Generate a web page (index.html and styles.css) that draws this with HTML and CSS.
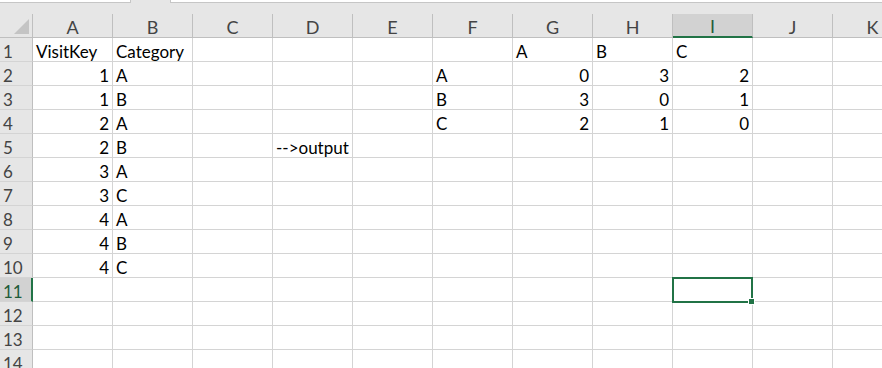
FILE: index.html
```html
<!DOCTYPE html>
<html lang="en">
<head>
    <meta charset="UTF-8">
    <meta name="viewport" content="width=device-width, initial-scale=1.0">
    <title>Hoja1</title>
<link rel="stylesheet" href="styles.css">
</head>
<body>
    <!-- Borde inferior del cuadro de nombres y de la barra de formulas -->
    <div class="toolbar">
        <div class="name-box"></div>
        <div class="formula-bar"></div>
    </div>

    <table class="sheet">
        <thead>
            <tr>
                <th class="corner"><span class="corner-mark"></span></th>
                <th>A</th><th>B</th><th>C</th><th>D</th><th>E</th><th>F</th>
                <th>G</th><th>H</th><th class="col-active">I</th><th>J</th><th>K</th>
            </tr>
        </thead>
        <tbody>
            <tr><th>1</th><td>VisitKey</td><td>Category</td><td></td><td></td><td></td><td></td><td>A</td><td>B</td><td>C</td><td></td><td></td></tr>
            <tr><th>2</th><td class="num">1</td><td>A</td><td></td><td></td><td></td><td>A</td><td class="num">0</td><td class="num">3</td><td class="num">2</td><td></td><td></td></tr>
            <tr><th>3</th><td class="num">1</td><td>B</td><td></td><td></td><td></td><td>B</td><td class="num">3</td><td class="num">0</td><td class="num">1</td><td></td><td></td></tr>
            <tr><th>4</th><td class="num">2</td><td>A</td><td></td><td></td><td></td><td>C</td><td class="num">2</td><td class="num">1</td><td class="num">0</td><td></td><td></td></tr>
            <tr><th>5</th><td class="num">2</td><td>B</td><td></td><td>--&gt;output</td><td></td><td></td><td></td><td></td><td></td><td></td><td></td></tr>
            <tr><th>6</th><td class="num">3</td><td>A</td><td></td><td></td><td></td><td></td><td></td><td></td><td></td><td></td><td></td></tr>
            <tr><th>7</th><td class="num">3</td><td>C</td><td></td><td></td><td></td><td></td><td></td><td></td><td></td><td></td><td></td></tr>
            <tr><th>8</th><td class="num">4</td><td>A</td><td></td><td></td><td></td><td></td><td></td><td></td><td></td><td></td><td></td></tr>
            <tr><th>9</th><td class="num">4</td><td>B</td><td></td><td></td><td></td><td></td><td></td><td></td><td></td><td></td><td></td></tr>
            <tr><th>10</th><td class="num">4</td><td>C</td><td></td><td></td><td></td><td></td><td></td><td></td><td></td><td></td><td></td></tr>
            <tr><th class="row-active">11</th><td></td><td></td><td></td><td></td><td></td><td></td><td></td><td></td><td class="selected"><span class="cursor"><span class="handle"></span></span></td><td></td><td></td></tr>
            <tr><th>12</th><td></td><td></td><td></td><td></td><td></td><td></td><td></td><td></td><td></td><td></td><td></td></tr>
            <tr><th>13</th><td></td><td></td><td></td><td></td><td></td><td></td><td></td><td></td><td></td><td></td><td></td></tr>
            <tr><th>14</th><td></td><td></td><td></td><td></td><td></td><td></td><td></td><td></td><td></td><td></td><td></td></tr>
        </tbody>
    </table>
</body>
</html>
```

FILE: styles.css
```css
/* Pagina general */
body {
    margin: 0;
    width: 882px;
    height: 368px;
    overflow: hidden;
    background-color: #e6e6e6;
    font-family: 'Lato', 'Liberation Sans', sans-serif;
}

/* Franja superior */
.toolbar {
    display: flex;
    height: 14px;
    background-color: #e6e6e6;
}

.name-box {
    width: 130px;
    height: 2px;
    background-color: #fff;
    border-bottom: 1px solid #c6c6c6;
    border-right: 1px solid #c6c6c6;
}

.formula-bar {
    flex: 1;
    height: 2px;
    margin-left: 39px;
    background-color: #fff;
    border-bottom: 1px solid #c6c6c6;
    border-left: 1px solid #c6c6c6;
}

/* Tabla */
.sheet {
    table-layout: fixed;
    border-collapse: separate;
    border-spacing: 0;
    width: 913px;
    background-color: #fff;
}

.sheet th,
.sheet td {
    box-sizing: border-box;
    height: 24px;
    padding: 0 3px;
    border-right: 1px solid #d4d4d4;
    border-bottom: 1px solid #d4d4d4;
    font-size: 17px;
    font-weight: normal;
    white-space: nowrap;
    overflow: hidden;
    vertical-align: bottom;
    line-height: 19px;
}

.sheet td {
    width: 80px;
    color: #000;
}

.sheet td.num {
    text-align: right;
}

/* Encabezados */
.sheet thead th {
    background-color: #e6e6e6;
    color: #444;
    font-size: 18px;
    text-align: center;
    border-right: 1px solid #bfbfbf;
    border-bottom: 1px solid #bfbfbf;
    width: 80px;
}

.sheet tbody th {
    width: 33px;
    background-color: #e6e6e6;
    color: #444;
    text-align: left;
    padding-left: 3px;
    border-right: 1px solid #bfbfbf;
    border-bottom: 1px solid #d4d4d4;
}

.sheet thead th.corner {
    width: 33px;
    position: relative;
}

.corner-mark {
    position: absolute;
    right: 3px;
    bottom: 3px;
    width: 0;
    height: 0;
    border-left: 15px solid transparent;
    border-bottom: 15px solid #c4c4c4;
}

/* Celda activa */
.sheet thead th.col-active {
    background-color: #d2d2d2;
    color: #1f5c3a;
    border-bottom: 2px solid #217346;
}

.sheet tbody th.row-active {
    background-color: #d2d2d2;
    color: #1f5c3a;
    border-right: 2px solid #217346;
}

.sheet td.selected {
    position: relative;
    overflow: visible;
}

.cursor {
    position: absolute;
    left: -1px;
    top: -1px;
    right: -1px;
    bottom: -2px;
    border: 2px solid #217346;
}

.handle {
    position: absolute;
    right: -4px;
    bottom: -4px;
    width: 5px;
    height: 5px;
    background-color: #217346;
    border: 1px solid #fff;
}
```
